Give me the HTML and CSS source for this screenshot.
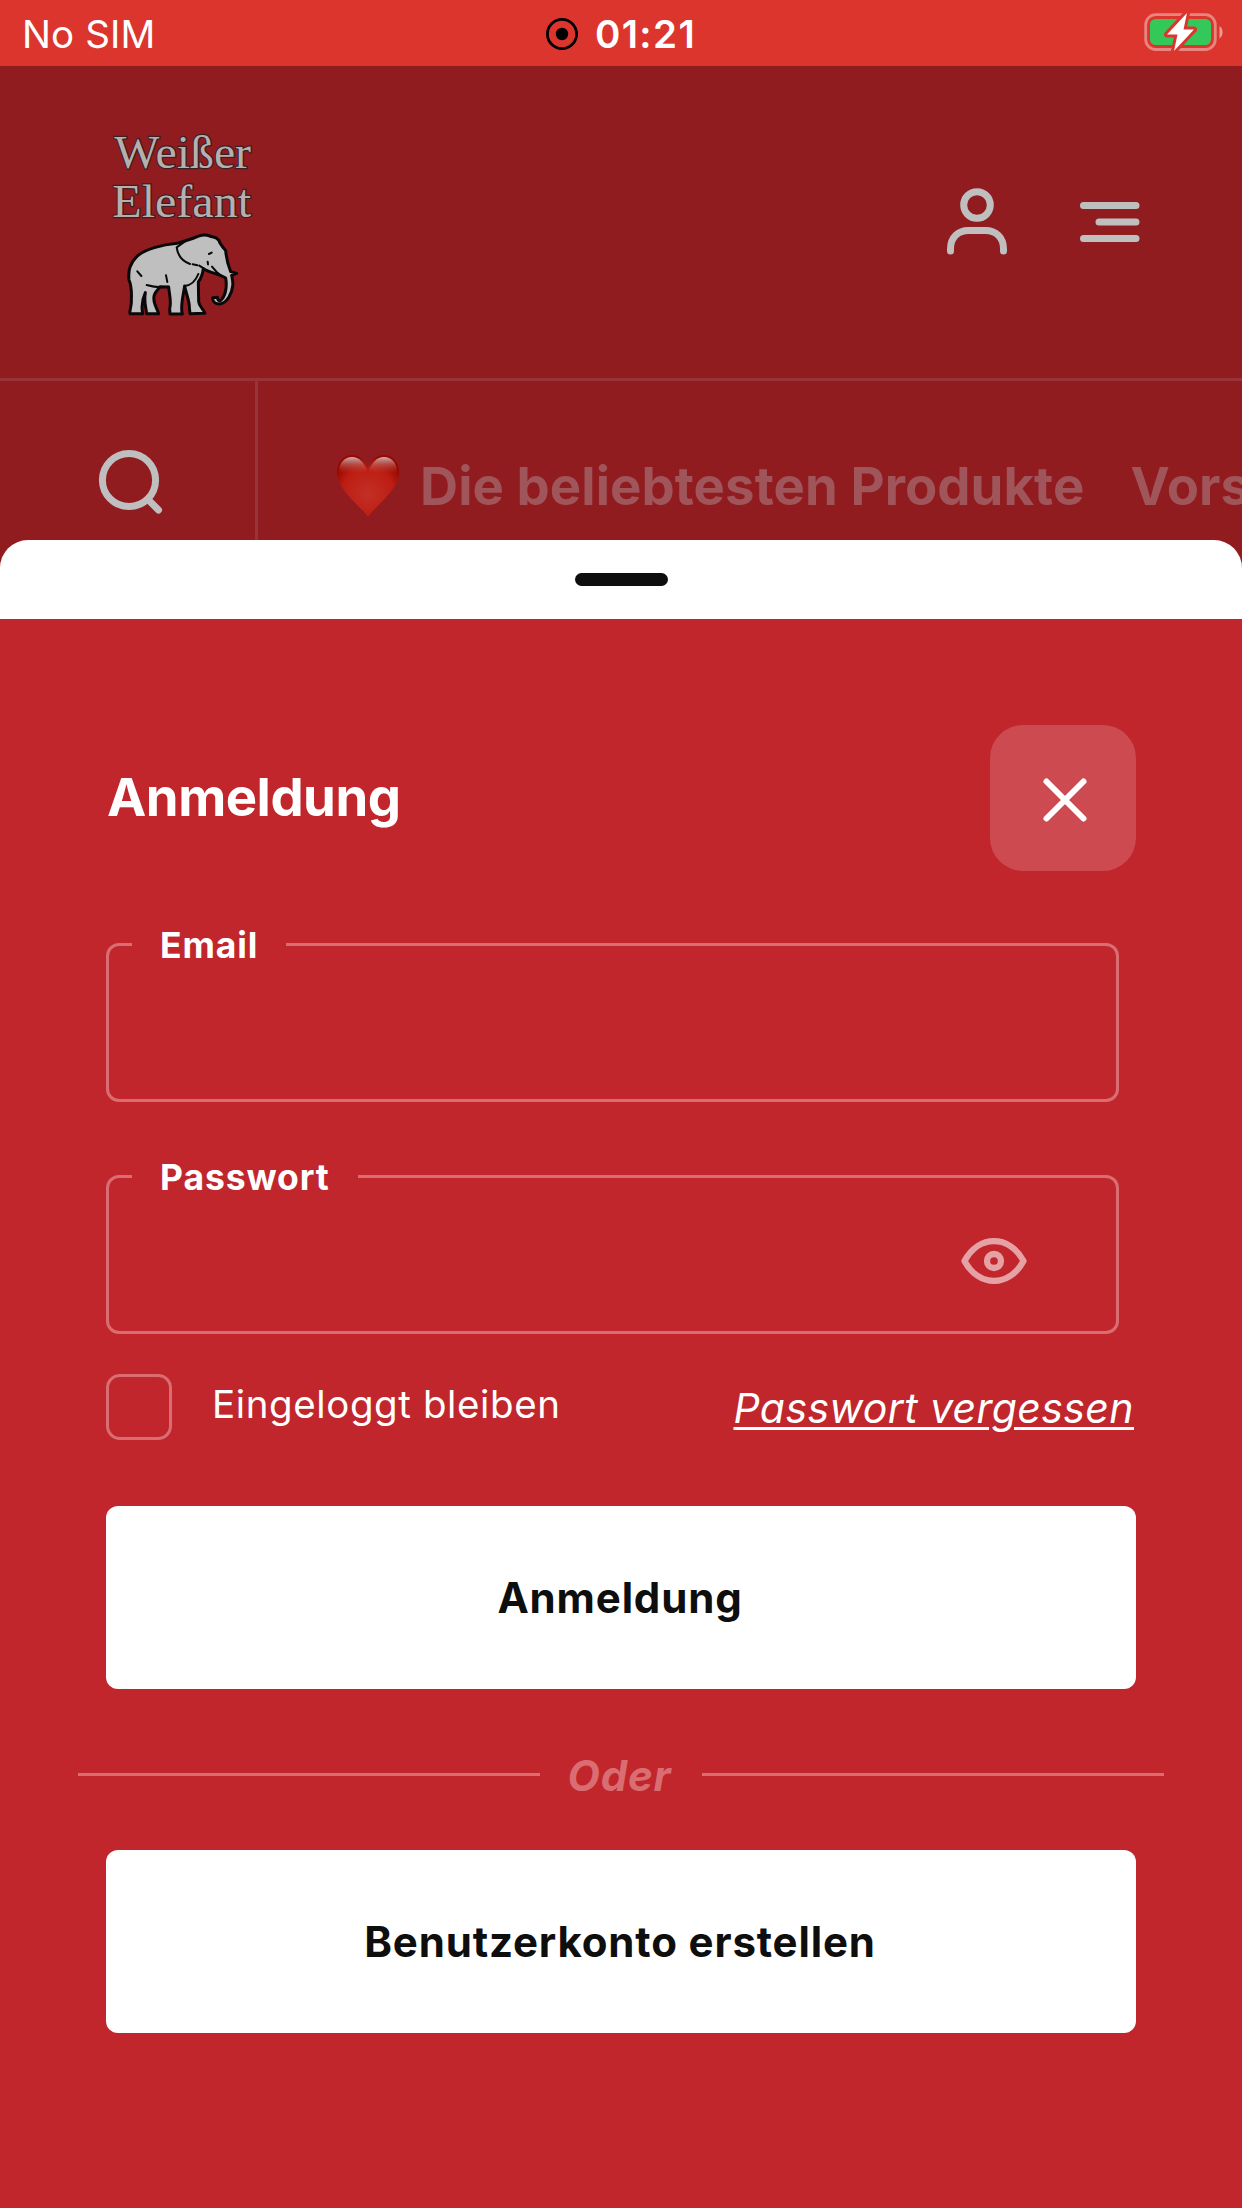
FILE: index.html
```html
<!DOCTYPE html>
<html lang="de">
<head>
<meta charset="utf-8">
<meta name="viewport" content="width=device-width">
<title>Weißer Elefant – Anmeldung</title>
<link rel="stylesheet" href="styles.css">
</head>
<body>
<div class="status">
  <span class="carrier">No SIM</span>
  <div class="clock">
    <svg width="34" height="34" viewBox="0 0 34 34"><circle cx="17" cy="17" r="14.6" fill="none" stroke="#000" stroke-width="2.8"/><circle cx="17" cy="17" r="6.2"/></svg>
    <span class="time">01:21</span>
  </div>
  <svg class="battery" width="82" height="42" viewBox="0 0 82 42">
    <rect x="3.7" y="3.7" width="69.6" height="34.8" rx="10" fill="none" stroke="#fff" stroke-opacity=".4" stroke-width="2.8"/>
    <path d="M77.500 15v12.500q3-2 3-6.250t-3-6.250z" fill="#fff" fill-opacity=".5"/>
    <rect x="8" y="8" width="61" height="26" rx="5.500" fill="#34c759"/>
    <path d="M45 2 25 23.500h10.500L32 40l20-21.500H41.500z" fill="#fff" stroke="#db352d" stroke-width="6" stroke-linejoin="round" paint-order="stroke"/>
  </svg>
</div>

<header class="top">
  <svg class="logo" width="190" height="210" viewBox="0 0 570 630">
    <g class="logo-text">
      <text x="73" y="143" textLength="410" lengthAdjust="spacingAndGlyphs">Weißer</text>
      <text x="67" y="290" textLength="416" lengthAdjust="spacingAndGlyphs">Elefant</text>
    </g>
    <g stroke="#0b0809" stroke-width="9" stroke-linejoin="round" stroke-linecap="round">
      <path fill="#bfbfbf" d="M262 370C215 374 165 388 142 408C120 430 114 450 117 480C126 500 125 520 124 540C126 556 117 574 120 581L158 581C154 560 158 535 166 518C162 540 166 556 168 568L170 581L206 581C200 562 186 545 193 525C198 512 206 508 210 500L236 501C238 525 245 545 239 566L240 582L277 582C270 560 280 525 284 498C288 520 299 545 298 562L300 581L345 580C340 566 327 560 326 545L325 486C334 474 338 462 340 446C358 458 388 462 407 474C411 495 408 522 397 536C390 546 384 544 382 532L368 533C367 546 377 553 390 552C412 548 426 520 428 498C430 488 427 476 425 466L440 460L422 455C415 438 409 415 407 392C398 380 390 374 386 360C376 348 365 352 360 348C340 340 325 348 312 354C295 360 280 364 262 370Z"/>
      <path fill="none" stroke-width="6" d="M284 365 260 382C263 405 278 424 300 432M308 433l14 3M142 454l12 14M228 466l4 20M170 495C190 501 220 502 236 500M284 498C305 496 318 480 325 462M357 402l8-4M353 425l1 8M366 440l14 16 12 10M328 437l14 9"/>
    </g>
  </svg>
  <div class="actions">
    <svg width="66" height="72" viewBox="0 0 66 72"><g fill="none" stroke="#bfbfbf" stroke-width="7" stroke-linecap="round"><circle cx="33" cy="19" r="13.300"/><path d="M6.500 65v-2c0-12 8-18.500 18-18.500h17C51.500 44.500 59.500 51 59.500 63v2"/></g></svg>
    <svg width="60" height="40" viewBox="0 0 60 40"><path d="M3.500 3.500h52.500M19 20h37M3.500 36.500h52.500" fill="none" stroke="#bfbfbf" stroke-width="7" stroke-linecap="round"/></svg>
  </div>
</header>

<nav class="nav">
  <div class="search">
    <svg width="66" height="66" viewBox="0 0 66 66"><g fill="none" stroke="#bfbfbf" stroke-width="7" stroke-linecap="round"><circle cx="31" cy="31" r="26.600"/><path d="M51 51.500 60.500 61"/></g></svg>
  </div>
  <div class="cats">
    <svg class="heart" width="64" height="64" viewBox="0 0 64 64">
      <defs>
        <radialGradient id="h" cx=".5" cy=".62" r=".6"><stop offset="0" stop-color="#c23027"/><stop offset=".7" stop-color="#bd1d12"/><stop offset="1" stop-color="#980800"/></radialGradient>
        <linearGradient id="g" x1="0" y1="0" x2="0" y2="1"><stop offset="0" stop-color="#d0c4c2" stop-opacity=".9"/><stop offset="1" stop-color="#c23027" stop-opacity="0"/></linearGradient>
      </defs>
      <path fill="url(#h)" d="M32 63C27 54 1 37 1 18C1 7 8 1 16 1C24 1 30 7 32 15C34 7 40 1 48 1C56 1 63 7 63 18C63 37 37 54 32 63Z"/>
      <path fill="url(#g)" d="M3 19C3 8 9 3 16 3C23 3 28 8 31 17Q17 22 3 19ZM61 19C61 8 55 3 48 3C41 3 36 8 33 17Q47 22 61 19Z"/>
    </svg>
    <span class="cat">Die beliebtesten Produkte</span>
    <span class="cat next">Vors</span>
  </div>
</nav>

<main class="sheet">
  <div class="grip"><i></i></div>
  <form class="panel">
    <div class="head">
      <h1>Anmeldung</h1>
      <button type="button" class="close" aria-label="Schließen"><svg width="46" height="46" viewBox="0 0 46 46"><path d="M4.500 4.500 41.500 41.500M41.500 4.500 4.500 41.500" stroke="#fff" stroke-width="6" stroke-linecap="round"/></svg></button>
    </div>
    <fieldset class="field"><legend>Email</legend></fieldset>
    <fieldset class="field second"><legend>Passwort</legend>
      <svg width="68" height="50" viewBox="0 0 68 50"><g fill="none" stroke="#e6a1a5" stroke-width="6.300" stroke-linejoin="round"><path d="M4.500 25C19-1.500 49-1.500 63.500 25C49 51.500 19 51.500 4.500 25Z"/><circle cx="34" cy="25" r="7"/></g></svg>
    </fieldset>
    <div class="options">
      <label class="remember"><span class="box"></span><span class="stay">Eingeloggt bleiben</span></label>
      <a class="forgot">Passwort vergessen</a>
    </div>
    <button type="button" class="btn">Anmeldung</button>
    <div class="or"><span>Oder</span></div>
    <button type="button" class="btn">Benutzerkonto erstellen</button>
  </form>
</main>
</body>
</html>
```
FILE: styles.css
```css
* { box-sizing: border-box; }
body {
  margin: 0;
  width: 1242px;
  height: 2208px;
  overflow: hidden;
  display: flex;
  flex-direction: column;
  background: #901c20;
  color: #fff;
  font-family: Inter, "Liberation Sans", sans-serif;
  white-space: nowrap;
}
svg { display: block; flex: none; }
button { border: 0; padding: 0; font: inherit; }

.status {
  height: 66px;
  flex: none;
  display: grid;
  grid-template-columns: 1fr auto 1fr;
  align-items: center;
  padding: 0 18px 0 22px;
  background: #db352d;
}
.carrier { font-size: 38.5px; line-height: 48px; letter-spacing: .1px; margin-top: 2px; }
.clock { display: flex; align-items: center; gap: 16px; margin: 2px 5px 0 0; }
.time { font-size: 38.5px; line-height: 48px; font-weight: 600; letter-spacing: 1.4px; }
.battery { justify-self: end; margin-top: -2px; }

.top {
  height: 315px;
  flex: none;
  display: flex;
  justify-content: space-between;
  border-bottom: 3px solid #983338;
  padding: 54px 102px 0 90px;
}
.logo-text {
  font: 128px "Liberation Serif", serif;
  font-size: 142px;
  fill: #b5b0af;
  stroke: #3b2023;
  stroke-width: 7px;
  paint-order: stroke;
}
.actions { display: flex; height: 204px; align-items: center; gap: 70px; }

.nav { height: 159px; flex: none; display: flex; overflow: hidden; }
.search {
  width: 258px;
  flex: none;
  border-right: 3px solid #983338;
  padding: 68px 0 0 98px;
}
.cats { display: flex; align-items: flex-start; padding: 73px 0 0 78px; }
.cat { color: #a0555a; font-size: 52.7px; line-height: 64px; font-weight: 700; letter-spacing: .08px; margin-left: 20px; }
.next { margin-left: 46px; }

.sheet {
  flex: 1;
  display: flex;
  flex-direction: column;
  background: #c1262c;
  border-radius: 28px 28px 0 0;
  overflow: hidden;
}
.grip { height: 79px; flex: none; background: #fff; padding-top: 33px; }
.grip i { display: block; width: 93px; height: 13px; margin: 0 auto; border-radius: 6.5px; background: #0e0e0e; }

.panel { padding: 106px 106px 0; }
.head { display: flex; justify-content: space-between; align-items: center; height: 146px; }
h1 { margin: -2px 0 0 1px; font-size: 52.7px; line-height: 64px; font-weight: 700; letter-spacing: -.5px; }
.close {
  width: 146px;
  height: 146px;
  border-radius: 33px;
  background: #cc4a50;
  display: grid;
  place-items: center;
  padding: 3px 0 0 3px;
}
.field {
  width: 1013px;
  height: 180px;
  margin: 51px 0 0;
  padding: 0 88px 0 23px;
  border: 3px solid #da6d72;
  border-radius: 13px;
}
.second { margin-top: 52px; }
.field legend { padding: 2px 28px 0; font-size: 35.5px; line-height: 43px; font-weight: 700; letter-spacing: .9px; }
.field svg { margin: 37px 0 0 auto; }
.options { display: flex; justify-content: space-between; margin-top: 40px; height: 66px; }
.remember { display: flex; align-items: center; gap: 40px; }
.box { width: 66px; height: 66px; border: 3px solid #da6d72; border-radius: 14px; }
.stay { font-size: 38.5px; line-height: 46px; letter-spacing: .6px; margin-top: -6px; }
.forgot {
  font-size: 41px;
  line-height: 50px;
  font-style: italic;
  letter-spacing: .4px;
  text-decoration: underline;
  text-decoration-thickness: 3px;
  text-underline-offset: 4px;
  margin: 9px 2px 0 0;
}
.btn {
  display: block;
  width: 1030px;
  height: 183px;
  border-radius: 12px;
  background: #fff;
  color: #0e0e0e;
  font-size: 42px;
  line-height: 52px;
  font-weight: 700;
  letter-spacing: .85px;
  text-align: center;
  padding: 0 2px 0 0;
}
.options + .btn { margin-top: 66px; }
.or {
  display: flex;
  align-items: center;
  justify-content: space-between;
  height: 161px;
  margin: 0 -28px;
  color: #da6d72;
  font-size: 42px;
  line-height: 50px;
  font-weight: 700;
  font-style: italic;
  letter-spacing: .8px;
}
.or span { margin: 13px 3px 0 0; }
.or::before, .or::after { content: ""; width: 462px; height: 3px; background: #da6d72; margin-top: 10px; }
```
